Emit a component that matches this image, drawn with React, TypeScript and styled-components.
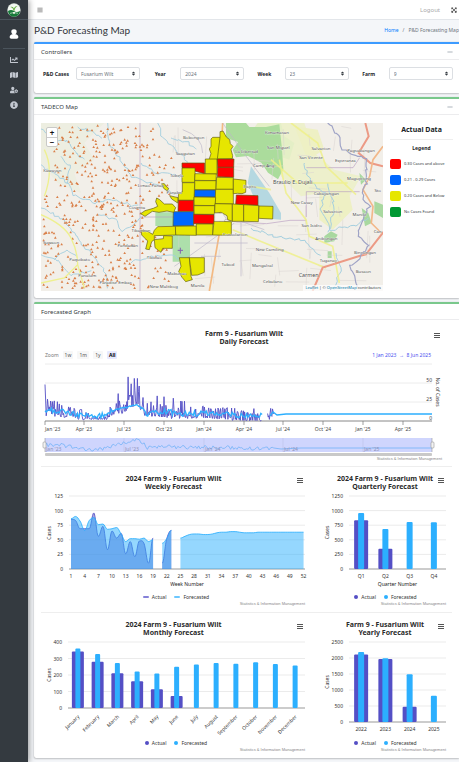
import React from 'react';
import styled, { createGlobalStyle } from 'styled-components';
import { FaBars, FaChartLine, FaExpandArrowsAlt, FaInfoCircle, FaMap, FaMinus, FaSort, FaUserCog } from 'react-icons/fa';

const Global = createGlobalStyle`
  *, *::before, *::after { box-sizing: border-box; }
  html, body, #root { min-height: 100vh; }
  body { margin: 0; background: #f4f6f9; color: #343a40; font-family: "Noto Sans", "Open Sans", sans-serif; font-size: 6px; line-height: 8px; overflow-x: hidden; }
  button, select { font-family: inherit; margin: 0; }
  svg text { font-family: "Noto Sans", "Open Sans", sans-serif; }
`;

/* ---------- shell ---------- */
const Shell = styled.div`
  display: flex;
  align-items: stretch;
  min-height: 100vh;
`;
const Sidebar = styled.aside`
  flex: 0 0 28px;
  background: #343a40;
  box-shadow: 1px 0 6px rgba(0, 0, 0, 0.4);
  display: flex;
  flex-direction: column;
  align-items: center;
  z-index: 1;
`;
const Brand = styled.a`
  width: 100%;
  height: 20px;
  border-bottom: 1px solid #4b545c;
  display: flex;
  justify-content: center;
  align-items: center;
`;
const UserLink = styled.a`
  width: 22px;
  height: 29px;
  border-bottom: 1px solid #4b545c;
  display: flex;
  justify-content: center;
  align-items: center;
`;
const SideNav = styled.nav`
  display: flex;
  flex-direction: column;
  padding-top: 3px;
`;
const SideLink = styled.a`
  display: flex;
  height: 15px;
  align-items: center;
  justify-content: center;
  color: #c2c7d0;
  font-size: 8px;
`;
const Main = styled.main`
  flex: 1;
  min-width: 0;
`;
const TopBar = styled.header`
  height: 20px;
  background: #fff;
  border-bottom: 1px solid #e3e6ea;
  display: flex;
  align-items: center;
  gap: 11px;
  padding: 0 2px 0 9px;
  color: #777;
`;
const IconButton = styled.button`
  display: flex;
  padding: 0;
  border: 0;
  background: none;
  color: ${(p) => p.color || '#777'};
  font-size: 6px;
`;
const Logout = styled.a`
  margin-left: auto;
  color: #aaa;
  text-decoration: none;
`;
const PageHead = styled.div`
  display: flex;
  align-items: center;
  justify-content: space-between;
  height: 22px;
  padding: 0 0 2px 6px;
`;
const PageTitle = styled.h1`
  margin: 0;
  font-family: Lato, "Noto Sans", sans-serif;
  font-size: 10px;
  line-height: 14px;
  font-weight: 400;
  color: #33373b;
`;
const Crumbs = styled.nav`
  display: flex;
  gap: 4px;
  font-size: 5px;
  color: #6c757d;
  white-space: nowrap;
  a { color: #007bff; text-decoration: none; }
`;

/* ---------- cards ---------- */
const Card = styled.section<{ $accent: string }>`
  margin: 0 0 4px 6px;
  background: #fff;
  border-top: 2px solid ${(p) => p.$accent};
  border-radius: 2px 0 0 2px;
  box-shadow: 0 0 1px rgba(0, 0, 0, 0.3), 0 1px 2px rgba(0, 0, 0, 0.2);
  &:last-child { margin-bottom: 0; }
`;
const CardHead = styled.header`
  display: flex;
  align-items: center;
  justify-content: space-between;
  height: 16px;
  padding: 0 6px 0 7px;
  border-bottom: 1px solid #ececee;
`;
const CardTitle = styled.h2`
  margin: 0;
  font-size: 6px;
  line-height: 8px;
  font-weight: 400;
`;
const Controls = styled.form`
  display: grid;
  grid-template-columns: repeat(4, 1fr);
  padding: 7px 0 13px 8px;
`;
const Field = styled.div`
  display: flex;
  align-items: center;
  gap: 6px;
  label { width: 28px; text-align: center; font-size: 5px; font-weight: 700; color: #212529; white-space: nowrap; }
`;
const SelectWrap = styled.div`
  flex: 1;
  max-width: 64px;
  display: grid;
  align-items: center;
  > * { grid-area: 1 / 1; }
  svg { justify-self: end; margin-right: 4px; font-size: 5px; color: #343a40; pointer-events: none; }
`;
const Select = styled.select`
  appearance: none;
  width: 100%;
  height: 13px;
  padding: 0 4px;
  border: 1px solid #dcdfe3;
  border-radius: 2px;
  background: #fff;
  color: #6b737b;
  font-size: 5px;
`;

/* ---------- map ---------- */
const MapBody = styled.div`
  display: grid;
  grid-template-columns: 342fr 76fr;
  padding: 8px 0 7px 7px;
`;
const MapFrame = styled.div`
  position: relative;
  svg { display: block; width: 100%; height: auto; }
`;
const ZoomBox = styled.div`
  position: absolute;
  top: 4px;
  left: 5px;
  display: flex;
  flex-direction: column;
  border: 1px solid #c9c9c6;
  border-radius: 2px;
  background: #fff;
`;
const ZoomButton = styled.button`
  width: 10px;
  height: 9px;
  padding: 0;
  border: 0;
  background: none;
  color: #111;
  font-size: 8px;
  line-height: 8px;
  font-weight: 700;
  & + & { border-top: 1px solid #ccc; }
`;
const Attribution = styled.div`
  position: absolute;
  right: 0;
  bottom: 0;
  padding: 0 2px;
  background: rgba(255, 255, 255, 0.7);
  font-size: 4px;
  line-height: 6px;
  a { color: #0078a8; text-decoration: none; }
`;
const Legend = styled.aside`
  padding: 2px 6px 0 7px;
`;
const LegendTitle = styled.h3`
  margin: 0 0 5px;
  padding: 0 0 4px;
  border-bottom: 1px solid #eee;
  text-align: center;
  font-size: 7px;
  line-height: 10px;
  color: #212529;
  white-space: nowrap;
`;
const LegendSub = styled.h4`
  margin: 0 0 4px;
  text-align: center;
  font-size: 5px;
  line-height: 7px;
  color: #212529;
`;
const LegendRow = styled.div`
  display: flex;
  align-items: center;
  gap: 3px;
  height: 16px;
  font-size: 4px;
  white-space: nowrap;
`;
const Swatch = styled.span<{ $c: string }>`
  width: 11px;
  height: 10px;
  border-radius: 2px;
  background: ${(p) => p.$c};
`;

/* ---------- charts ---------- */
const Graphs = styled.div`
  padding: 0 7px;
`;
const ChartRow = styled.div`
  display: grid;
  grid-template-columns: 270fr 141fr;
  border-top: 1px solid #eee;
`;
const Figure = styled.figure<{ $top: number; $h: number }>`
  position: relative;
  margin: 0;
  padding-top: ${(p) => p.$top}px;
  min-height: ${(p) => p.$h}px;
  svg.plot { display: block; width: 100%; height: auto; overflow: visible; }
`;
const ChartTitle = styled.figcaption<{ $narrow?: boolean }>`
  text-align: center;
  font-size: 7px;
  line-height: 8px;
  font-weight: 700;
  color: #2b2b2b;
  padding: ${(p) => (p.$narrow ? '0 0 0 7px' : '0 5px 0 0')};
`;
const MenuButton = styled.button<{ $right: number; $top: number }>`
  position: absolute;
  top: ${(p) => p.$top}px;
  right: ${(p) => p.$right}px;
  display: flex;
  flex-direction: column;
  gap: 1px;
  width: 6px;
  padding: 0;
  border: 0;
  background: none;
  span { height: 1px; background: #555; }
`;
const RangeBar = styled.div`
  display: flex;
  align-items: center;
  gap: 4px;
  height: 10px;
  padding: 0 21px 0 4px;
  margin-top: 4px;
  font-size: 5px;
  color: #777;
`;
const RangeButton = styled.button<{ $on?: boolean }>`
  height: 8px;
  min-width: 10px;
  padding: 0 2px;
  border: 0;
  border-radius: 1px;
  background: ${(p) => (p.$on ? '#e6e9ff' : '#f7f7f7')};
  color: ${(p) => (p.$on ? '#000' : '#555')};
  font-weight: ${(p) => (p.$on ? 700 : 400)};
  font-size: 5px;
  line-height: 8px;
`;
const RangeText = styled.span`
  margin-left: auto;
  color: #4a4ff0;
`;
const Keys = styled.div<{ $narrow?: boolean }>`
  display: flex;
  justify-content: center;
  gap: 8px;
  height: 8px;
  margin-top: 4px;
  font-size: 5px;
  color: #333;
  padding: ${(p) => (p.$narrow ? '0 0 0 8px' : '0')};
`;
const Key = styled.span<{ $c: string; $line?: boolean }>`
  display: flex;
  align-items: center;
  gap: 3px;
  &::before {
    content: '';
    width: ${(p) => (p.$line ? 6 : 4)}px;
    height: ${(p) => (p.$line ? 2 : 4)}px;
    border-radius: 2px;
    background: ${(p) => p.$c};
  }
`;
const Credit = styled.div<{ $right: number }>`
  text-align: right;
  padding-right: ${(p) => p.$right}px;
  font-family: "Liberation Sans", Arial, sans-serif;
  font-size: 4px;
  line-height: 5px;
  color: #888;
`;

const ACTUAL = '#544fc5';
const FORECAST = '#2caffe';

function seeded(seed: number) {
  let s = seed;
  return () => {
    s = (s * 16807) % 2147483647;
    return s / 2147483647;
  };
}
function at(stops: number[][], x: number, k = 1) {
  for (let i = 1; i < stops.length; i++) {
    if (x <= stops[i][0]) {
      const a = stops[i - 1];
      const b = stops[i];
      return a[k] + ((b[k] - a[k]) * (x - a[0])) / (b[0] - a[0]);
    }
  }
  return stops[stops.length - 1][k];
}
function spline(p: number[][]) {
  let d = `M${p[0][0]} ${p[0][1]}`;
  for (let i = 1; i < p.length; i++) {
    const a = p[i - 1];
    const b = p[i];
    const z = p[i - 2] || a;
    const n = p[i + 1] || b;
    const slope = (l: number[], m: number[], r: number[]) => ((m[1] - l[1]) * (r[1] - m[1]) <= 0 ? 0 : (r[1] - l[1]) / 6);
    const dx = (b[0] - a[0]) / 2.6;
    d += `C${a[0] + dx} ${a[1] + slope(z, a, b)} ${b[0] - dx} ${b[1] - slope(a, b, n)} ${b[0]} ${b[1]}`;
  }
  return d;
}

/* ---------- sidebar drawings ---------- */
const Logo = () => (
  <svg width="14" height="14" viewBox="0 0 42 42" aria-label="TADECO">
    <circle cx="21" cy="21" r="20" fill="#dfe8df" />
    <circle cx="21" cy="21" r="18" fill="#f4f8f2" />
    <path d="M3 24q9-6 18 0t18-1a18 18 0 0 1-36 1z" fill="#177a3a" />
    <path d="M20 24c-1-7-4-10-10-12 7-2 10 2 11 6 1-5 4-9 11-9-5 3-9 7-10 15z" fill="#5aa832" />
    <path d="M9 31q12-5 24 0" stroke="#dff0df" strokeWidth="2" fill="none" />
    <path d="M18 27h6v5h-6z" fill="#e8f2e4" />
  </svg>
);
const Person = () => (
  <svg width="10" height="10" viewBox="0 0 30 30" aria-label="Profile">
    <path d="M15 1c6 0 9 4 8 9-1 3-2 5-4 6 6 1 9 4 9 8 0 3-2 5-5 5H7c-3 0-5-2-5-5 0-4 3-7 9-8-2-1-3-3-4-6-1-5 2-9 8-9z" fill="#fff" />
  </svg>
);

/* ---------- farm map: 1026 x 504 drawing units ---------- */
const PLACES: [string, number, number, number?][] = [
  ['Bobongon', 458, 45], ['Saagutan', 433, 91], ['Tubela', 407, 158], ['Limao Panab', 330, 188], ['Panabo', 400, 209],
  ['Cosenta', 288, 255], ['Tibanban', 300, 323], ['Pandadan', 260, 369], ['Suwaon', 30, 359], ['Paquibato', 116, 411],
  ['Panalum', 139, 459], ['Paradise Embac', 224, 479], ['Tibulao', 340, 403], ['Kawayan', 34, 144], ['Mabunao', 408, 451], ['New Malitbog', 368, 491],
  ['Manila', 470, 487], ['Kimamasan', 708, 30], ['San Miguel', 712, 74], ['La Libertad', 617, 87], ['Camp-Ang', 668, 127],
  ['Braulio E. Dujali', 755, 178, 16], ['Salvacion', 840, 77], ['San Vicente', 810, 104], ['Esperanza', 913, 113], ['Pagsabangan', 960, 82],
  ['Magupising', 954, 167], ['Cabayangan', 856, 211], ['Sto', 1010, 202], ['New Casay', 782, 239], ['Salvacion', 875, 265],
  ['Maniki', 955, 275], ['San Isidro', 812, 309], ['Anibongan', 856, 347], ['Can', 1010, 327], ['Bincungan', 972, 390], ['Tuganay', 862, 414],
  ['Carmen', 803, 459, 16], ['Busaon', 967, 445], ['New Camiling', 686, 381], ['Mangalcal', 664, 427], ['Tubod', 561, 426],
  ['Cebulano', 695, 475], ['Consolacion', 582, 335], ['Dapco', 626, 192],
];
const FARMS: [string, string][] = [
  ['Y', '510,48 515,43 537,43 537,26 546,24 556,42 566,50 568,62 576,70 570,80 575,98 574,107 530,108 527,128 507,128 505,107 510,92 505,78 510,70'],
  ['R', '423,120 491,120 491,152 423,134'],
  ['Y', '423,135 462,135 462,152 461,178 423,178'],
  ['Y', '493,108 528,108 528,153 493,153'],
  ['R', '529,108 579,108 578,133 530,133'],
  ['R', '530,133 578,133 578,163 529,161'],
  ['Y', '462,152 526,153 525,173 461,172'],
  ['Y', '461,173 525,173 525,200 461,200'],
  ['Y', '527,163 577,164 577,199 525,199'],
  ['B', '460,201 524,201 524,222 459,222'],
  ['Y', '424,179 461,179 459,232 411,232 413,210 424,207'],
  ['Y', '524,199 577,199 577,243 522,242'],
  ['Y', '577,168 615,172 614,208 603,212 590,211 577,212'],
  ['R', '586,216 651,218 651,247 584,244'],
  ['Y', '459,222 524,223 522,248 459,247'],
  ['R', '412,232 458,232 458,265 411,265'],
  ['Y', '459,248 521,248 520,274 459,274'],
  ['Y', '522,242 574,243 574,295 560,290 558,278 540,268 521,270'],
  ['Y', '574,243 608,245 608,295 574,295'],
  ['Y', '608,245 654,248 652,296 608,295'],
  ['Y', '654,249 696,250 695,288 653,286'],
  ['B', '397,266 458,266 458,308 396,309'],
  ['R', '458,274 519,275 519,303 458,302'],
  ['Y', '403,310 466,309 466,337 404,336'],
  ['Y', '466,303 516,303 515,336 466,336'],
  ['Y', '519,295 571,296 571,337 515,336'],
  ['Y', '350,311 403,310 404,336 340,338 340,350 332,356 325,380 314,378 320,354 302,336 301,322 318,324 335,334 340,322'],
  ['Y', '340,350 367,347 368,338 394,339 394,376 365,376 360,388 352,382 342,374'],
  ['Y', '347,225 356,230 370,243 394,243 404,254 398,268 378,264 354,268 334,265 312,280 299,272 312,263 337,256 350,250 344,236'],
  ['Y', '362,182 370,182 377,192 383,196 379,204 368,196'],
  ['Y', '386,218 411,224 410,240 392,228'],
  ['Y', '415,404 445,404 450,460 454,470 434,476 423,463 413,446 420,430'],
  ['Y', '445,404 490,404 490,448 470,456 452,457'],
];
const FARM_FILL: Record<string, string> = { Y: '#e6e600', R: '#ff0000', B: '#0066ff' };
const hills = (() => {
  const r = seeded(77);
  const out: string[] = [];
  for (let i = 0; i < 520; i++) {
    const x = 6 + r() * 395;
    const y = 4 + r() * 488;
    const edge = y < 90 ? 345 : y < 230 ? 400 : y < 310 ? 330 : 385;
    const road = x < 130 && Math.abs(y - (250 + x * 1.3)) < 24;
    if (x > edge || road || (x < 40 && y < 210) || (x > 300 && r() < 0.3)) continue;
    out.push(`M${x.toFixed(0)} ${y.toFixed(0)}l4 7h-8z`);
  }
  return out.join('');
})();
const streets = (() => {
  const r = seeded(31);
  let d = '';
  for (let i = 0; i < 75; i++) {
    const x = 400 + r() * 600;
    const y = r() * 490;
    const l = 25 + r() * 60;
    const t = (r() - 0.5) * 14;
    d += r() < 0.5 ? `M${x} ${y}l${l} ${t}` : `M${x} ${y}l${t} ${l}`;
  }
  return d;
})();
function rivers(points: string, seed: number) {
  const r = seeded(seed * 9973);
  const p = points.split(' ').map((s) => s.split(',').map(Number));
  let d = `M${p[0][0]} ${p[0][1]}`;
  for (let i = 1; i < p.length; i++) {
    const n = Math.max(2, Math.round(Math.hypot(p[i][0] - p[i - 1][0], p[i][1] - p[i - 1][1]) / 9));
    for (let k = 1; k <= n; k++) {
      const x = p[i - 1][0] + ((p[i][0] - p[i - 1][0]) * k) / n + (r() - 0.5) * 9;
      const y = p[i - 1][1] + ((p[i][1] - p[i - 1][1]) * k) / n + (r() - 0.5) * 9;
      d += `L${x.toFixed(0)} ${y.toFixed(0)}`;
    }
  }
  return d;
}
const RIVERS = [
  '0,18 40,45 80,55 105,90 130,110', '110,12 150,25 185,45', '200,0 205,60 240,110 275,160 340,185 400,215', '0,125 50,160 80,180 100,215 160,240 210,230 290,250',
  '170,275 220,290 245,325 300,285', '0,255 60,285 100,330 130,370 190,440 200,500', '40,410 75,380 110,400', '350,0 365,45 405,80 440,115', '300,120 350,150 420,160',
  '0,395 50,410 90,455 150,445', '390,45 440,60 470,80', '60,100 85,130 75,180', '270,420 330,400 400,400 430,420',
];
const BLUE_LINES = ['790,120 810,180 850,210 840,260 870,320 940,310 980,285', '630,315 700,340 790,350 840,400', '860,180 880,250 860,330', '885,390 900,440 880,500'];
const FarmMap = () => (
  <svg viewBox="0 0 1026 504" role="img" aria-label="Map of farms by case level">
    <rect width="1026" height="504" fill="#f2efe9" />
    <path d="M0 0h190l-60 60 30 50-60 40 20 60-70-30-50-60z" fill="#e9ecdc" opacity=".6" />
    <path d="M680 0h110l30 90 60 50 80 20-40 70-80-20-60 10-60-60-30-80z" fill="#ecefc9" opacity=".9" />
    <path d="M835 190l80-20 20 90-60 60-40-30zM760 10l70 10 20 60-50 30z" fill="#eef0c4" />
    <path d="M650 0h70l10 40 30 20-15 50-60-20-60-20 10-50z" fill="#e4efc6" />
    <path d="M555 0h60l10 12h50l40-8 8 75 4 60-16 30-30-20-20-30-40-20-36 4-10-22 16-24-36-12z" fill="#abdc9c" />
    <path d="M630 130l55 80 35 60 0 20-25-2V250h-45l-30-70z" fill="#aad3df" opacity=".85" />
    <path d="M343 268h54v41h-54zM395 336h52v80h-52z" fill="#addfab" />
    <path d="M1000 235l26 10v40l-26-15zM850 340l20-15 20 10-10 20-30 5zM955 150l20 20-15 15zM962 255l20 15 10 30-20 10zM860 385h12v20h-12z" fill="#a9d8a0" />
    <path d={streets} stroke="#d9d3d0" strokeWidth="1.5" fill="none" />
    <path d="M297 0v504M297 282h230l60 15 90 5 70-10 50 0M796 206v76M796 206h160M796 134h140l20-30" stroke="#b79bc0" strokeWidth="2.5" fill="none" opacity=".75" />
    {RIVERS.map((p, i) => <path key={p} d={rivers(p, i + 5)} stroke="#a5cfdf" strokeWidth="2.8" fill="none" />)}
    {BLUE_LINES.map((p, i) => <path key={p} d={rivers(p, i + 40)} stroke="#a5cfdf" strokeWidth="3" fill="none" />)}
    <path d={hills} fill="#d9804a" />
    <path d="M10 80q30 60 0 140M0 275q70 30 90 70t20 80l-40 40-70 15M110 425l20 70" stroke="#eef08f" strokeWidth="4" fill="none" />
    <path d="M545 0l-8 150 0 170-32 184" stroke="#f3b982" strokeWidth="5" fill="none" />
    <path d="M750 0l80 60 25 70 90 85M715 110l20 100 60 80 10 50 70 30 20 110M690 200l-60-10M575 320l120 50 160 65M690 110l80 70h150" stroke="#eff08a" strokeWidth="5" fill="none" opacity=".85" />
    <path d="M973 0l10 40-30 50 35 30 38 10M815 504l30-70 110-35 20-5 55-70" stroke="#ec9a85" strokeWidth="6" fill="none" />
    <path d="M1026 70l-30 40-10 50-20 40 30 50-5 50 30 30" stroke="#f2b88a" strokeWidth="5" fill="none" />
    <path d={rivers('860,0 890,40 905,80 975,110 975,180 960,210 985,250 950,330 985,370 930,430 950,500', 9)} stroke="#9fa3c6" strokeWidth="3.5" fill="none" />
    <path d="M545 0q60 90 140 190M670 320l-70-25M400 430q60-40 180-130M460 360h160M480 400h60M425 20q60 20 60 70M600 300v160" stroke="#bcb6c8" strokeWidth="2" fill="none" />
    {FARMS.map(([k, pts]) => <polygon key={pts} points={pts} fill={FARM_FILL[k]} stroke="#5f5a12" strokeWidth="2" />)}
    <path d="M537 43l-8 65" stroke="#5f5a12" strokeWidth="2" />
    <path d="M521 271h24l10 15-6 9h-28z" fill="#f4f2ec" stroke="#887" strokeWidth="1" />
    <path d="M418 374v18M410 382h16" stroke="#8460b0" strokeWidth="3" />
    {PLACES.map(([t, x, y, s]) => <text key={t + y} x={x} y={y + 4} fontSize={s || 13} fill="#4c4c4c" textAnchor="middle" stroke="#fff" strokeWidth="1" paintOrder="stroke">{t}</text>)}
  </svg>
);

/* ---------- daily chart ---------- */
const ENV = [
  [4, 4, 30], [8, 6, 28], [18, 6, 26], [24, 3, 20], [32, 4, 18], [38, 2, 22], [44, 1, 12], [52, 2, 8], [66, 2, 10], [70, 7, 22],
  [80, 9, 28], [88, 16, 38], [96, 20, 42], [100, 12, 38], [104, 7, 26], [114, 6, 30], [124, 5, 28], [130, 3, 20], [138, 3, 28], [144, 3, 24],
  [164, 4, 20], [186, 2, 20], [190, 1, 18], [222, 0, 16], [233, 3, 18],
];
const MID = [
  [4, 14], [20, 13], [40, 8], [55, 6], [66, 8], [72, 14], [85, 18], [96, 21], [102, 16], [106, 9], [128, 13], [134, 9], [160, 10], [186, 10], [200, 7], [233, 8],
];
const SPIKES: Record<number, number> = { 4: 48, 77: 36, 87: 58, 90: 49, 93: 56, 96: 56, 98: 46, 116: 33, 123: 32, 132: 30, 143: 26 };
const Y0 = 61;
const K = 0.76;
const daily = (() => {
  const r = seeded(4242);
  const a: string[] = [];
  const seen = new Set<number>();
  let pen = 'M';
  for (let x = 4; x < 233; x += 0.62) {
    if (x > 221 && x < 226) { pen = 'M'; continue; }
    const lo = at(ENV, x);
    const hi = at(ENV, x, 2);
    let v = lo + (hi - lo) * Math.pow(r(), 1.9);
    const key = Math.floor(x);
    if (SPIKES[key] && !seen.has(key)) { v = SPIKES[key]; seen.add(key); }
    a.push(`${pen}${x.toFixed(1)} ${(Y0 - v * K).toFixed(1)}`);
    pen = 'L';
  }
  const f: string[] = [];
  for (let x = 4; x < 222; x += 1.3) f.push(`${x.toFixed(1)} ${(Y0 - (at(MID, x) + (r() - 0.5) * (x > 72 && x < 102 ? 2 : 7)) * K).toFixed(1)}`);
  const nav: string[] = [];
  for (let x = 4; x < 233; x += 1.6) nav.push(`${x.toFixed(1)} ${(93 - at(MID, x) * 0.6 + (r() - 0.5) * 4).toFixed(1)}`);
  return {
    actual: a.join(''),
    forecast: `M${f.join('L')}M229 56L232 52 236 55 245 54 270 54H391`,
    nav: `M${nav.join('L')}L240 89 260 88H391`,
  };
})();
const DAILY_TICKS: [number, string][] = [[4, "Jan '23"], [43, "Apr '23"], [83, "Jul '23"], [123, "Oct '23"], [163, "Jan '24"], [203, "Apr '24"], [242, "Jul '24"], [282, "Oct '24"], [322, "Jan '25"], [362, "Apr '25"]];
const NAV_TICKS: [number, string][] = [[5, "Jan '23"], [84, "Jul '23"], [164, "Jan '24"], [243, "Jul '24"], [323, "Jan '25"]];
const DAILY_ROWS: [string, number][] = [['50', 22], ['25', 41], ['0', 60]];
const DailyPlot = () => (
  <svg className="plot" viewBox="0 0 411 96" role="img" aria-label="Daily forecast">
    {[4, 23, 42].map((y) => <path key={y} d={`M4 ${y}H391`} stroke="#ececec" strokeWidth="1" />)}
    <path d="M4 61H391" stroke="#888" strokeWidth="1" />
    <path d={daily.actual} fill="none" stroke={ACTUAL} strokeWidth=".9" strokeLinejoin="round" />
    <path d={daily.forecast} fill="none" stroke={FORECAST} strokeWidth="1.3" />
    {DAILY_TICKS.map(([x, t], i) => (
      <g key={t}>
        <path d={`M${x} 61v4`} stroke="#777" strokeWidth=".7" />
        <text x={x} y={71} fontSize="5" fill="#444" textAnchor={i ? 'middle' : 'start'}>{t}</text>
      </g>
    ))}
    {DAILY_ROWS.map(([t, y]) => <text key={t} x={391} y={y} fontSize="5" fill="#444" textAnchor="end">{t}</text>)}
    <text fontSize="5" fill="#333" textAnchor="middle" transform="translate(395 32) rotate(90)">No. of Cases</text>
    <rect x="4" y="78" width="387" height="14" fill="#cfd5fd" />
    <path d="M83 78v14M163 78v14M242 78v14M322 78v14" stroke="#bcc3ea" strokeWidth=".6" />
    <path d={daily.nav} fill="none" stroke="#72b2f8" strokeWidth=".8" />
    {NAV_TICKS.map(([x, t]) => <text key={t} x={x} y={91} fontSize="5" fill="#8d92b8">{t}</text>)}
    <path d="M4 78v14M391 78v14" stroke="#999" strokeWidth=".6" />
    <rect x="2" y="82" width="3" height="6" rx="1" fill="#f2f2f2" stroke="#999" strokeWidth=".6" />
    <rect x="390" y="82" width="3" height="6" rx="1" fill="#f2f2f2" stroke="#999" strokeWidth=".6" />
    <rect x="4" y="93" width="387" height="3" rx="1" fill="#c9c9c9" />
  </svg>
);

/* ---------- weekly chart ---------- */
const W_ACTUAL: [number, number[]][] = [
  [1, [85, 83, 69, 69, 69, 96, 56, 73, 33, 65, 53, 61, 26, 47, 21, 48, 44, 10, 53]],
  [21, [10, 52, 66]],
];
const W_FORECAST: [number, number[]][] = [
  [1, [86, 90, 82, 66, 83, 88, 76, 77, 68, 69, 71, 60, 47, 52, 52, 51, 53, 47, 50]],
  [21, [44, 52, 66]],
  [25, [53, 56, 59, 60, 60, 59, 59, 60, 62, 63, 63, 64, 64, 63, 62, 62, 62, 63, 63, 63, 63, 63, 63, 63, 63, 63, 63, 63]],
];
const weekPoints = ([start, vals]: [number, number[]]) => vals.map((v, i) => [30 + (start + i - 1) * 4.56, 78 - v * 0.584]);
const Area = ({ run, color }: { run: [number, number[]]; color: string }) => {
  const p = weekPoints(run);
  const line = spline(p);
  return (
    <g>
      <path d={`${line}V78H${p[0][0]}Z`} fill={color} fillOpacity=".5" />
      <path d={line} fill="none" stroke={color} strokeWidth="1" strokeOpacity=".85" />
    </g>
  );
};
const WeeklyPlot = () => (
  <svg className="plot" viewBox="0 0 270 98" role="img" aria-label="Weekly forecast">
    {[125, 100, 75, 50, 25, 0].map((v, i) => (
      <g key={v}>
        <path d={`M28 ${5 + i * 14.6}H264`} stroke={v ? '#ebebeb' : '#999'} strokeWidth="1" />
        <text x={22} y={Math.round(7 + i * 14.6)} fontSize="5" fill="#333" textAnchor="end">{v}</text>
      </g>
    ))}
    {W_ACTUAL.map((r) => <Area key={r[0]} run={r} color={ACTUAL} />)}
    {W_FORECAST.map((r) => <Area key={r[0]} run={r} color={FORECAST} />)}
    {Array.from({ length: 18 }, (_, i) => 1 + i * 3).map((w) => <text key={w} x={30 + (w - 1) * 4.56} y={87} fontSize="5" fill="#333" textAnchor="middle">{w}</text>)}
    <text x={146} y={95} fontSize="5" fill="#222" textAnchor="middle">Week Number</text>
    <text fontSize="5" fill="#333" textAnchor="middle" transform="translate(10 42) rotate(-90)">Cases</text>
  </svg>
);

/* ---------- bar charts ---------- */
type Bars = {
  label: string; width: number; height: number; left: number; right: number; base: number; max: number; step: number;
  names: string[]; actual: number[]; forecast: number[]; wide: number; thin: number; tilt?: boolean; axis?: string;
};
const BarPlot = (b: Bars) => {
  const top = 5;
  const y = (v: number) => b.base - ((b.base - top) * v) / b.max;
  const slot = (b.right - b.left) / b.names.length;
  const rows = Array.from({ length: b.max / b.step + 1 }, (_, i) => i * b.step);
  return (
    <svg className="plot" viewBox={`0 0 ${b.width} ${b.height}`} role="img" aria-label={b.label}>
      {rows.map((v) => (
        <g key={v}>
          <path d={`M${b.left} ${y(v)}H${b.right}`} stroke={v ? '#ebebeb' : '#999'} strokeWidth="1" />
          <text x={b.left - 6} y={Math.round(y(v) + 2)} fontSize="5" fill="#333" textAnchor="end">{v}</text>
        </g>
      ))}
      {b.names.map((n, i) => {
        const cx = b.left + slot * (i + 0.5);
        return (
          <g key={n}>
            {b.actual[i] ? <rect x={cx - b.wide / 2} y={y(b.actual[i])} width={b.wide} height={b.base - y(b.actual[i])} rx="1" fill={ACTUAL} /> : null}
            <rect x={cx - b.thin / 2} y={y(b.forecast[i])} width={b.thin} height={b.base - y(b.forecast[i])} rx="1" fill={FORECAST} />
            {b.tilt ? (
              <text fontSize="5" fill="#333" textAnchor="end" transform={`translate(${cx + 2} ${b.base + 9}) rotate(-45)`}>{n}</text>
            ) : (
              <text x={cx} y={b.base + 9} fontSize="5" fill="#333" textAnchor="middle">{n}</text>
            )}
          </g>
        );
      })}
      {b.axis ? <text x={(b.left + b.right) / 2} y={b.base + 17} fontSize="5" fill="#222" textAnchor="middle">{b.axis}</text> : null}
      <text fontSize="5" fill="#333" textAnchor="middle" transform={`translate(${b.tilt ? 10 : b.left - 20} ${(b.base + top) / 2}) rotate(-90)`}>Cases</text>
    </svg>
  );
};

const Menu = ({ right, top }: { right: number; top: number }) => (
  <MenuButton type="button" $right={right} $top={top} aria-label="Chart menu"><span /><span /><span /></MenuButton>
);
const ChartKeys = ({ line, narrow }: { line?: boolean; narrow?: boolean }) => (
  <Keys $narrow={narrow}>
    <Key $c={line ? '#8581d8' : ACTUAL} $line={line}>Actual</Key>
    <Key $c={line ? '#6cc7fe' : FORECAST} $line={line}>Forecasted</Key>
  </Keys>
);
const CREDIT = 'Statistics & Information Management';
const FIELDS: [string, string][] = [['P&D Cases', 'Fusarium Wilt'], ['Year', '2024'], ['Week', '23'], ['Farm', '9']];
const LEVELS: [string, string][] = [['#ff0000', '0.30 Cases and above'], ['#0066ff', '0.21 - 0.29 Cases'], ['#e6e600', '0.20 Cases and Below'], ['#009933', 'No Cases Found']];
const MONTHS = ['January', 'February', 'March', 'April', 'May', 'June', 'July', 'August', 'September', 'October', 'November', 'December'];

const Collapse = () => <IconButton type="button" aria-label="Collapse" color="#adb5bd"><FaMinus /></IconButton>;

export default function App() {
  return (
    <>
      <Global />
      <Shell>
        <Sidebar>
          <Brand href="#"><Logo /></Brand>
          <UserLink href="#"><Person /></UserLink>
          <SideNav>
            <SideLink href="#" aria-label="Charts"><FaChartLine /></SideLink>
            <SideLink href="#" aria-label="Map"><FaMap /></SideLink>
            <SideLink href="#" aria-label="Users"><FaUserCog /></SideLink>
            <SideLink href="#" aria-label="About"><FaInfoCircle /></SideLink>
          </SideNav>
        </Sidebar>
        <Main>
          <TopBar>
            <IconButton type="button" aria-label="Toggle menu"><FaBars /></IconButton>
            <Logout href="#">Logout</Logout>
            <IconButton type="button" aria-label="Full screen" color="#444"><FaExpandArrowsAlt /></IconButton>
          </TopBar>
          <PageHead>
            <PageTitle>P&amp;D Forecasting Map</PageTitle>
            <Crumbs><a href="#">Home</a><span>/</span><span>P&amp;D Forecasting Map</span></Crumbs>
          </PageHead>

          <Card $accent="#3d9bff">
            <CardHead><CardTitle>Controllers</CardTitle><Collapse /></CardHead>
            <Controls>
              {FIELDS.map(([name, value]) => (
                <Field key={name}>
                  <label htmlFor={name}>{name}</label>
                  <SelectWrap>
                    <Select id={name} defaultValue={value}><option>{value}</option></Select>
                    <FaSort />
                  </SelectWrap>
                </Field>
              ))}
            </Controls>
          </Card>

          <Card $accent="#7ac88c">
            <CardHead><CardTitle>TADECO Map</CardTitle><Collapse /></CardHead>
            <MapBody>
              <MapFrame>
                <FarmMap />
                <ZoomBox>
                  <ZoomButton type="button">+</ZoomButton>
                  <ZoomButton type="button">−</ZoomButton>
                </ZoomBox>
                <Attribution><a href="#">Leaflet</a> | © <a href="#">OpenStreetMap</a> contributors</Attribution>
              </MapFrame>
              <Legend>
                <LegendTitle>Actual Data</LegendTitle>
                <LegendSub>Legend</LegendSub>
                {LEVELS.map(([c, t]) => <LegendRow key={t}><Swatch $c={c} />{t}</LegendRow>)}
              </Legend>
            </MapBody>
          </Card>

          <Card $accent="#7ac88c">
            <CardHead><CardTitle>Forecasted Graph</CardTitle></CardHead>
            <Graphs>
              <Figure $top={10} $h={146}>
                <ChartTitle>Farm 9 - Fusarium Wilt<br />Daily Forecast</ChartTitle>
                <Menu right={12} top={13} />
                <RangeBar>
                  <span>Zoom</span>
                  <RangeButton type="button">1w</RangeButton>
                  <RangeButton type="button">1m</RangeButton>
                  <RangeButton type="button">1y</RangeButton>
                  <RangeButton type="button" $on>All</RangeButton>
                  <RangeText>1 Jan 2023 &nbsp;→&nbsp; 8 Jun 2025</RangeText>
                </RangeBar>
                <DailyPlot />
                <Credit $right={10}>{CREDIT}</Credit>
              </Figure>
              <ChartRow>
                <Figure $top={8} $h={145}>
                  <ChartTitle>2024 Farm 9 - Fusarium Wilt<br />Weekly Forecast</ChartTitle>
                  <Menu right={8} top={11} />
                  <WeeklyPlot />
                  <ChartKeys line />
                  <Credit $right={6}>{CREDIT}</Credit>
                </Figure>
                <Figure $top={8} $h={145}>
                  <ChartTitle $narrow>2024 Farm 9 - Fusarium Wilt<br />Quarterly Forecast</ChartTitle>
                  <Menu right={8} top={11} />
                  <BarPlot label="Quarterly forecast" width={141} height={98} left={38} right={135} base={78} max={1250} step={250}
                    names={['Q1', 'Q2', 'Q3', 'Q4']} actual={[835, 345]} forecast={[960, 685, 805, 800]} wide={14} thin={6} axis="Quarter Number" />
                  <ChartKeys narrow />
                  <Credit $right={6}>{CREDIT}</Credit>
                </Figure>
              </ChartRow>
              <ChartRow>
                <Figure $top={8} $h={145}>
                  <ChartTitle>2024 Farm 9 - Fusarium Wilt<br />Monthly Forecast</ChartTitle>
                  <Menu right={8} top={11} />
                  <BarPlot label="Monthly forecast" width={270} height={98} left={27} right={264} base={71} max={400} step={100}
                    names={MONTHS} actual={[343, 280, 211, 162, 114, 73]} forecast={[360, 327, 273, 221, 209, 250, 264, 273, 268, 277, 267, 258]} wide={12} thin={5} tilt />
                  <ChartKeys />
                  <Credit $right={6}>{CREDIT}</Credit>
                </Figure>
                <Figure $top={8} $h={145}>
                  <ChartTitle $narrow>Farm 9 - Fusarium Wilt<br />Yearly Forecast</ChartTitle>
                  <Menu right={8} top={11} />
                  <BarPlot label="Yearly forecast" width={141} height={98} left={38} right={135} base={85} max={2500} step={500}
                    names={['2022', '2023', '2024', '2025']} actual={[2110, 1970, 480]} forecast={[2190, 1995, 1490, 820]} wide={14} thin={6} />
                  <ChartKeys narrow />
                  <Credit $right={6}>{CREDIT}</Credit>
                </Figure>
              </ChartRow>
            </Graphs>
          </Card>
        </Main>
      </Shell>
    </>
  );
}
